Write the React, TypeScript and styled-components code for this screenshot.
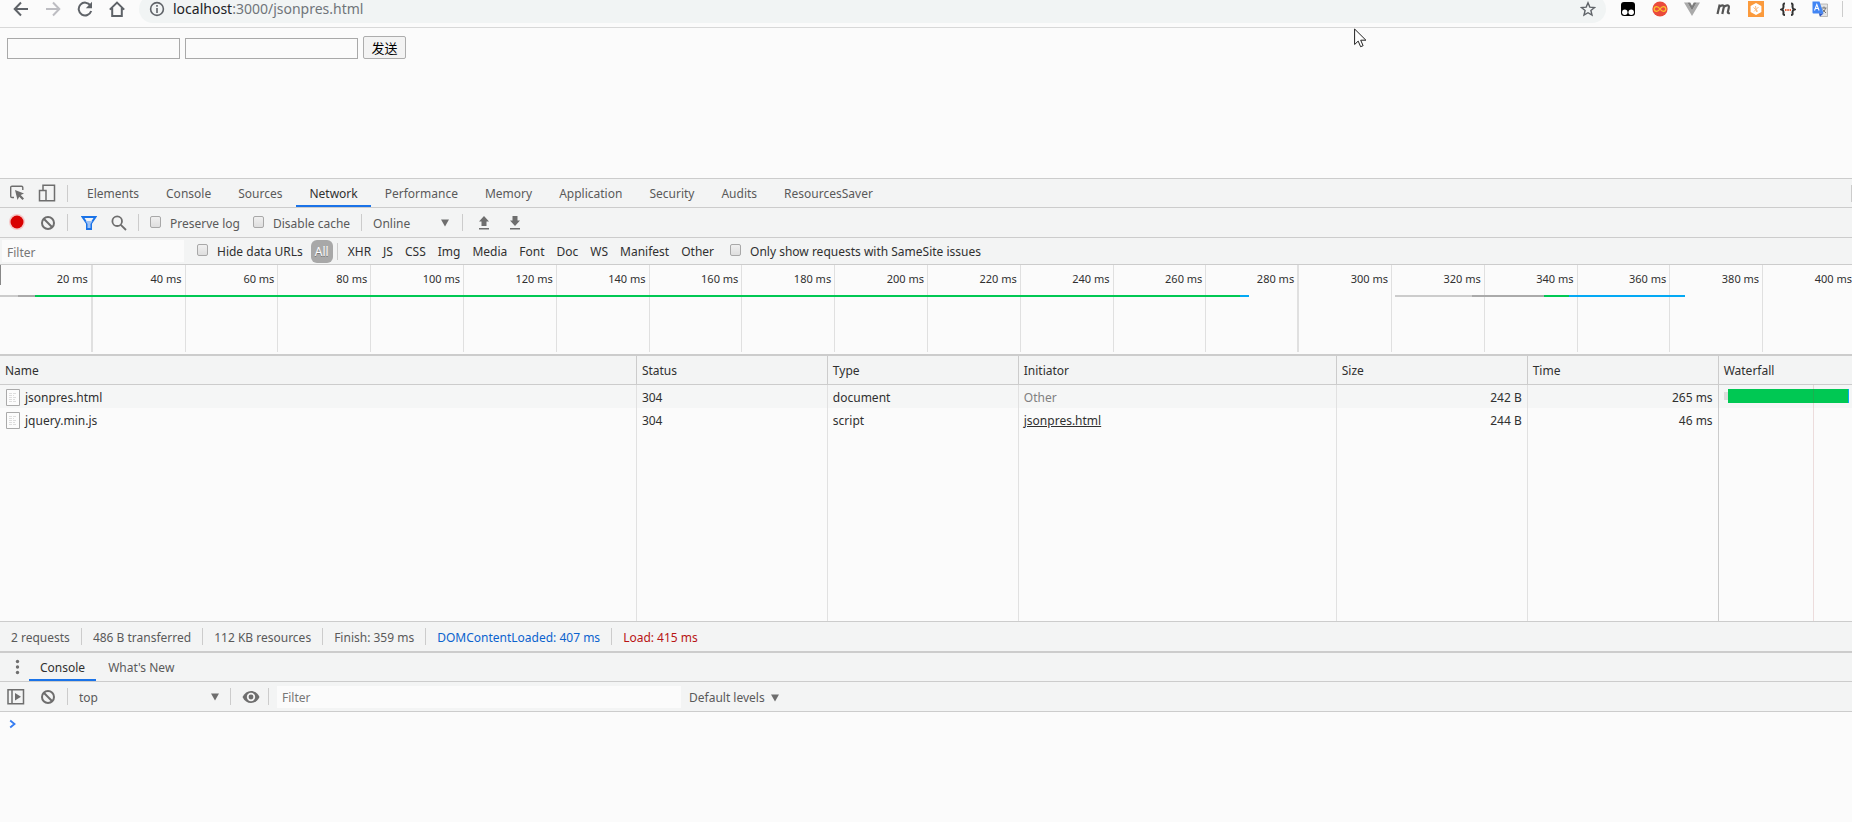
import React from 'react';
import styled, { createGlobalStyle, css } from 'styled-components';

const Global = createGlobalStyle`
  *, *::before, *::after { box-sizing: border-box; }
  body {
    margin: 0;
    background: #fbfbfb;
    color: #303030;
    font: 12px/16px "Noto Sans", "Noto Sans CJK SC", sans-serif;
  }
  button, input, select { font: inherit; color: inherit; margin: 0; }
  svg { display: block; flex: none; }
`;

const BAR = '#f3f4f4';
const LINE = '#ccc';

const Page = styled.div`
  min-height: 100vh;
  overflow: hidden;
`;

/* ---------- browser chrome ---------- */

const BrowserBar = styled.header`
  height: 28px;
  overflow: hidden;
  border-bottom: 1px solid #d8d8d8;
`;

const BrowserRow = styled.div`
  display: flex;
  align-items: center;
  height: 28px;
  margin-top: -5px;
  padding: 0 9px 0 13px;
`;

const NavButtons = styled.nav`
  display: flex;
  gap: 16px;
`;

const IconButton = styled.button<{ $size?: number }>`
  display: flex;
  align-items: center;
  justify-content: center;
  flex: none;
  width: ${(p) => p.$size ?? 16}px;
  height: ${(p) => p.$size ?? 16}px;
  padding: 0;
  border: 0;
  background: none;
  color: #6e6e6e;
`;

const AddressBar = styled.div`
  display: flex;
  flex: 1;
  align-items: center;
  height: 28px;
  margin-left: 14px;
  padding: 0 10px 0 10px;
  border-radius: 14px;
  background: #f1f4f4;
`;

const Url = styled.div`
  flex: 1;
  padding-left: 8px;
  color: #70757a;
  font-size: 14px;
  line-height: 20px;
  b { color: #202124; font-weight: 400; }
`;

const Extensions = styled.div`
  display: flex;
  gap: 16px;
  margin-left: 14px;
`;

const ChromeDivider = styled.span`
  width: 1px;
  height: 16px;
  margin-left: 14px;
  background: #ccc;
`;

/* ---------- inspected page ---------- */

const Inspected = styled.main`
  height: 150px;
`;

const SendForm = styled.form`
  display: flex;
  align-items: flex-end;
  gap: 5px;
  padding: 8px 7px;
`;

const PlainInput = styled.input`
  width: 173px;
  height: 21px;
  padding: 1px 3px;
  border: 1px solid #a9a9a9;
  background: #fbfbfb;
`;

const SendButton = styled.button`
  height: 23px;
  width: 43px;
  padding: 0;
  border: 1px solid #adadad;
  border-radius: 2px;
  background: #f3f3f3;
  color: #000;
  font: 13px/20px "Noto Sans CJK SC", sans-serif;
`;

/* ---------- devtools ---------- */

const DevTools = styled.section`
  border-top: 1px solid ${LINE};
`;

const Bar = styled.div<{ $height: number; $thick?: boolean }>`
  display: flex;
  align-items: center;
  height: ${(p) => p.$height}px;
  border-bottom: ${(p) => (p.$thick ? 2 : 1)}px solid ${LINE};
  background: ${BAR};
  color: #5a5a5a;
  white-space: nowrap;
`;

const Divider = styled.span<{ $gap?: number }>`
  flex: none;
  width: 1px;
  height: 17px;
  margin: 0 ${(p) => p.$gap ?? 11}px;
  background: ${LINE};
`;

const ToolIcons = styled.div<{ $gap: number; $left?: number; $right?: number }>`
  display: flex;
  align-items: center;
  gap: ${(p) => p.$gap}px;
  padding-left: ${(p) => p.$left ?? 0}px;
  padding-right: ${(p) => p.$right ?? 0}px;
`;

const Tabs = styled.div`
  display: flex;
  align-self: stretch;
  flex: 1;
  gap: 1px;
`;

const Tab = styled.button<{ $active?: boolean; $pad: number }>`
  height: 100%;
  padding: 4px ${(p) => p.$pad}px 0;
  border: 0;
  border-bottom: 2px solid transparent;
  background: none;
  ${(p) => p.$active && css`
    border-bottom-color: #1a73e8;
    color: #303030;
  `}
`;

const Check = styled.label<{ $dark?: boolean }>`
  display: flex;
  align-items: center;
  gap: 9px;
  padding-top: 2px;
  color: ${(p) => (p.$dark ? '#303030' : '#5a5a5a')};
  input {
    appearance: none;
    width: 11px;
    height: 12px;
    margin-bottom: 4px;
    border: 1px solid #a8a8a8;
    border-radius: 2px;
    background: linear-gradient(#f0f0f0, #dedede);
  }
`;

const Checks = styled.div`
  display: flex;
  gap: 13px;
`;

const SelectBox = styled.div<{ $width: number }>`
  display: flex;
  align-items: center;
  width: ${(p) => p.$width}px;
  select {
    flex: 1;
    appearance: none;
    height: 20px;
    padding: 2px 0 0;
    border: 0;
    background: none;
  }
`;

const LevelsButton = styled.button`
  display: flex;
  align-items: center;
  gap: 6px;
  padding: 2px 8px 0;
  border: 0;
  background: none;
`;

const FilterInput = styled.input<{ $width: number }>`
  width: ${(p) => p.$width}px;
  height: 22px;
  padding: 2px 5px 0;
  border: 0;
  background: #fbfbfb;
  &::placeholder { color: #777; opacity: 1; }
`;

const FilterField = styled.div`
  padding: 0 13px 0 2px;
`;

const Types = styled.div`
  display: flex;
  align-items: center;
  padding: 0 10px 0 8px;
`;

const TypeButton = styled.button<{ $on?: boolean }>`
  height: 23px;
  padding: 2px 6px 0;
  border: 0;
  border-radius: 6px;
  background: ${(p) => (p.$on ? '#a8a8a8' : 'none')};
  color: ${(p) => (p.$on ? '#fff' : '#303030')};
  ${(p) => p.$on && css`
    padding: 2px 4px 0;
    text-shadow: 0 1px 0 #777;
  `}
`;

/* ---------- overview ---------- */

const Overview = styled.div`
  position: relative;
  height: 91px;
  overflow: hidden;
  border-bottom: 2px solid ${LINE};
`;

const Ruler = styled.div`
  display: flex;
  height: 87px;
`;

const Tick = styled.div<{ $strong?: boolean }>`
  flex: 0 0 5.011%;
  padding: 6px 3px 0 0;
  border-right: ${(p) => (p.$strong ? 2 : 1)}px solid #e0e0e0;
  font-size: 11px;
  text-align: right;
  white-space: nowrap;
`;

const StartMark = styled.span`
  position: absolute;
  top: 0;
  left: 0;
  width: 1px;
  height: 20px;
  background: #888;
`;

const Span = styled.span`
  position: absolute;
  top: 30px;
  height: 2px;
`;

/* ---------- request table ---------- */

const Table = styled.table`
  width: 100%;
  height: 265px;
  border-collapse: separate;
  border-spacing: 0;
  table-layout: fixed;
`;

const cellBase = css`
  padding: 2px 5px 0;
  text-align: left;
  font-weight: 400;
  white-space: nowrap;
`;

const Th = styled.th`
  ${cellBase}
  height: 29px;
  border-right: 1px solid ${LINE};
  border-bottom: 1px solid ${LINE};
  background: ${BAR};
  &:last-child { border-right: 0; }
`;

const Td = styled.td<{ $right?: boolean; $muted?: boolean }>`
  ${cellBase}
  border-right: 1px solid #e1e1e1;
  ${(p) => p.$right && 'text-align: right;'}
  ${(p) => p.$muted && 'color: #808080;'}
  a { color: inherit; }
  &:nth-child(6) { border-right-color: ${LINE}; }
`;

const Row = styled.tr<{ $shade?: boolean }>`
  height: 23px;
  background: ${(p) => (p.$shade ? '#f5f6f6' : 'none')};
`;

const FillRow = styled.tr``;

const FileName = styled.div`
  display: flex;
  align-items: center;
  gap: 5px;
  padding-left: 1px;
`;

const WaterCell = styled.td`
  position: relative;
  padding: 0;
  &::after {
    content: '';
    position: absolute;
    top: 0;
    bottom: 0;
    left: 71%;
    width: 1px;
    background: rgba(160, 60, 60, 0.16);
  }
`;

const WaterBar = styled.div`
  display: flex;
  align-items: center;
  padding: 0 3px 2px 5px;
`;

const Wait = styled.span`
  width: 4px;
  height: 8px;
  background: #ddd;
`;

const Receive = styled.span`
  flex: 1;
  height: 14px;
  border-right: 1px solid #03a9f4;
  background: #00c853;
`;

/* ---------- status + console ---------- */

const Status = styled(Bar)`
  padding-left: 11px;
  border-top: 1px solid ${LINE};
`;

const Metric = styled.span<{ $color?: string }>`
  padding-top: 2px;
  color: ${(p) => p.$color ?? '#5a5a5a'};
`;

const ConsoleBody = styled.div`
  padding: 7px 9px;
`;

const Pointer = styled.svg`
  position: absolute;
  top: 28px;
  left: 73.1%;
`;

/* ---------- icons ---------- */

const Caret = () => (
  <svg width="8" height="8" viewBox="0 0 8 8" fill="#6e6e6e"><path d="M0 0.5h8L4 7.5z" /></svg>
);

const Clear = () => (
  <svg width="16" height="16" viewBox="0 0 16 16" fill="none" stroke="#6e6e6e" strokeWidth="2">
    <circle cx="8" cy="8" r="6" /><path d="M3.8 3.8l8.4 8.4" />
  </svg>
);

const Doc = () => (
  <svg width="14" height="17" viewBox="0 0 14 17" fill="#fcfcfc" stroke="#aaa">
    <path d="M.5 .5h13v16h-13z" />
    <path d="M3 4.5h8M3 6.5h5M3 8.5h8M3 10.5h6M3 12.5h7" stroke="#ddd" strokeDasharray="3 1" />
  </svg>
);

const Arrow = ({ flip, color }: { flip?: boolean; color: string }) => (
  <svg width="16" height="16" viewBox="0 0 16 16" fill="none" stroke={color} strokeWidth="2">
    <path d={flip ? 'M1 8h13M8 1.5L14.3 8 8 14.5' : 'M15 8H2M8 1.5L1.7 8 8 14.5'} />
  </svg>
);

const tabs = ['Elements', 'Console', 'Sources', 'Network', 'Performance', 'Memory', 'Application', 'Security', 'Audits', 'ResourcesSaver'];
const types = ['XHR', 'JS', 'CSS', 'Img', 'Media', 'Font', 'Doc', 'WS', 'Manifest', 'Other'];
const ticks = Array.from({ length: 20 }, (_, i) => (i + 1) * 20);

const spans = [
  { from: 0, to: 0.97, color: '#ccc' },
  { from: 0.97, to: 1.89, color: '#aaa' },
  { from: 1.89, to: 66.98, color: '#00c853' },
  { from: 66.98, to: 67.46, color: '#03a9f4' },
  { from: 75.32, to: 79.48, color: '#ccc' },
  { from: 79.48, to: 83.37, color: '#aaa' },
  { from: 83.37, to: 84.72, color: '#00c853' },
  { from: 84.72, to: 90.98, color: '#03a9f4' },
];

const columns = [
  ['Name', '34.39%'], ['Status', '10.31%'], ['Type', '10.31%'], ['Initiator', '17.17%'],
  ['Size', '10.31%'], ['Time', '10.31%'], ['Waterfall', 'auto'],
];

export default function App() {
  return (
    <Page>
      <Global />
      <BrowserBar>
        <BrowserRow>
          <NavButtons aria-label="Navigation">
            <IconButton aria-label="Back"><Arrow color="#5f6368" /></IconButton>
            <IconButton aria-label="Forward"><Arrow flip color="#bdbdc2" /></IconButton>
            <IconButton aria-label="Reload">
              <svg width="16" height="16" viewBox="0 0 16 16" fill="none" stroke="#5f6368" strokeWidth="2">
                <path d="M13.4 4.4A6.4 6.4 0 1 0 14.2 10" /><path d="M15 .8v6.4H8.8z" fill="#5f6368" stroke="none" />
              </svg>
            </IconButton>
            <IconButton aria-label="Home">
              <svg width="16" height="16" viewBox="0 0 16 16" fill="none" stroke="#5f6368" strokeWidth="2">
                <path d="M.8 8.6L8 1.6l7.2 7M3.2 7v8h9.6V7" />
              </svg>
            </IconButton>
          </NavButtons>
          <AddressBar>
            <svg width="16" height="16" viewBox="0 0 16 16" fill="none" stroke="#5f6368" strokeWidth="1.6">
              <circle cx="8" cy="8" r="6.4" /><path d="M8 7v5M8 4v1.7" />
            </svg>
            <Url><b>localhost</b>:3000/jsonpres.html</Url>
            <IconButton aria-label="Bookmark this page">
              <svg width="16" height="16" viewBox="0 0 16 16" fill="none" stroke="#5f6368" strokeWidth="1.4">
                <path d="M8 1.8l1.8 4.3 4.7.4-3.6 3 1.1 4.6L8 11.7 4 14.1l1.1-4.6-3.6-3 4.7-.4z" />
              </svg>
            </IconButton>
          </AddressBar>
          <Extensions>
            <svg width="16" height="16" viewBox="0 0 16 16">
              <rect x="1" y="1" width="14" height="14" rx="3" fill="#000" />
              <circle cx="4.8" cy="11.2" r="2.7" fill="#fff" /><circle cx="11.2" cy="11.2" r="2.7" fill="#fff" />
            </svg>
            <svg width="16" height="16" viewBox="0 0 16 16">
              <circle cx="8" cy="8" r="7.6" fill="#ea4a3c" />
              <path d="M8 8C6.6 5.9 5.6 5.6 4.6 5.6a2.4 2.4 0 0 0 0 4.8C5.6 10.4 6.6 10.1 8 8s2.4-2.4 3.4-2.4a2.4 2.4 0 0 1 0 4.8C10.4 10.4 9.4 10.1 8 8z" fill="none" stroke="#fbc02d" strokeWidth="1.3" />
            </svg>
            <svg width="16" height="16" viewBox="0 0 16 16">
              <path d="M0 1.5h3.4L8 9.5l4.6-8H16L8 15z" fill="#aaa" /><path d="M3.4 1.5h2.8L8 4.7l1.8-3.2h2.8L8 9.5z" fill="#7d7d7d" />
            </svg>
            <svg width="16" height="16" viewBox="0 0 16 16" fill="none" stroke="#555" strokeWidth="2.2">
              <path d="M1.5 13L3.7 3.5M2.8 6.5C4.6 3.8 8.4 3.3 7.7 6.5L6.3 13M7.5 6.5C9.3 3.8 13.7 3.3 12.8 6.8L11.8 11.2Q11.7 12.6 13.8 12" />
            </svg>
            <svg width="16" height="16" viewBox="0 0 16 16">
              <rect width="16" height="16" fill="#fb9a3c" /><path d="M8 2l5.4 3v6L8 14l-5.4-3V5z" fill="#fff" />
              <path d="M5.5 6.5l4.5 4M6 10.5l4.5-4.5M7.5 5l1 6" stroke="#fbb97a" fill="none" />
            </svg>
            <svg width="16" height="16" viewBox="0 0 16 16" fill="none" stroke="#333" strokeWidth="2">
              <path d="M5 2.5C2.8 2.5 3.5 4 3.5 6 3.5 7.5 3 8 1.5 8.5 3 9 3.5 9.5 3.5 11c0 2-.7 3 1.5 3M11 2.5c2.2 0 1.5 1.5 1.5 3.5 0 1.500.5 2 2 2.5-1.500.5-2 1-2 2.5 0 2 .7 3-1.5 3" />
              <path d="M5 9h1.5M7.3 9h1.5M9.6 9H11" stroke="#e8643c" />
            </svg>
            <svg width="16" height="16" viewBox="0 0 16 16">
              <path d="M6 3h9.5v12.5H8z" fill="#e4e4e4" stroke="#999" strokeWidth=".6" />
              <path d="M9.5 7h5M12 5.5V7M13.5 7c-.5 2.5-2 4-3.5 5M10.5 8.5l3.5 3.5" stroke="#777" fill="none" />
              <path d="M.5 .5h7L11.5 12.5H1.5a1 1 0 0 1-1-1z" fill="#4285f4" />
              <path d="M8 15.5l3.5-3H7z" fill="#2a56c6" />
              <path d="M2.5 9.5L4.8 3.5 7.1 9.5M3.3 7.5h3" stroke="#fff" fill="none" strokeWidth="1.1" />
            </svg>
          </Extensions>
          <ChromeDivider />
        </BrowserRow>
      </BrowserBar>

      <Inspected>
        <SendForm onSubmit={(e) => e.preventDefault()}>
          <PlainInput type="text" aria-label="First value" />
          <PlainInput type="text" aria-label="Second value" />
          <SendButton type="submit">发送</SendButton>
        </SendForm>
      </Inspected>

      <DevTools>
        <Bar $height={29}>
          <ToolIcons $left={8} $gap={12} $right={5}>
            <IconButton $size={18} aria-label="Inspect element">
              <svg width="18" height="18" viewBox="0 0 18 18" fill="none" stroke="#6e6e6e" strokeWidth="1.4">
                <path d="M6 13.5H4a1.3 1.3 0 0 1-1.3-1.3V3.5A1.3 1.3 0 0 1 4 2.2h9.5a1.3 1.3 0 0 1 1.3 1.3V6" />
                <path d="M7 6l9 3.5-3.3 1.6L16 14.5 14.5 16l-3.3-3.3L9.5 16z" fill="#6e6e6e" stroke="none" />
              </svg>
            </IconButton>
            <IconButton $size={18} aria-label="Toggle device toolbar">
              <svg width="18" height="18" viewBox="0 0 18 18" fill="none" stroke="#6e6e6e" strokeWidth="1.5">
                <path d="M5 6V1.2h11.5v15.6H8M1.5 6.5H8v10.3H1.5z" />
              </svg>
            </IconButton>
          </ToolIcons>
          <Divider $gap={6} />
          <Tabs role="tablist">
            {tabs.map((t) => (
              <Tab key={t} role="tab" $pad={13} $active={t === 'Network'}>{t}</Tab>
            ))}
          </Tabs>
          <Divider $gap={0} />
        </Bar>

        <Bar $height={30}>
          <ToolIcons $left={9} $gap={15}>
            <IconButton aria-label="Stop recording">
              <svg width="16" height="18" viewBox="0 0 16 18">
                <circle cx="8" cy="8" r="8" fill="#f6b5b5" opacity=".7" /><circle cx="8" cy="8" r="6.5" fill="#d80000" />
              </svg>
            </IconButton>
            <IconButton aria-label="Clear"><Clear /></IconButton>
          </ToolIcons>
          <Divider />
          <ToolIcons $left={2} $gap={14}>
            <IconButton aria-label="Filter">
              <svg width="16" height="16" viewBox="0 0 16 16" fill="none" stroke="#1a73e8" strokeWidth="2">
                <path d="M1.6 2h12.8L10 8.5V14H6V8.5z" /><path d="M4.5 6h7L9.5 9v4h-3V9z" fill="#9cc1f5" stroke="none" />
              </svg>
            </IconButton>
            <IconButton aria-label="Search">
              <svg width="16" height="16" viewBox="0 0 16 16" fill="none" stroke="#6e6e6e" strokeWidth="1.8">
                <circle cx="6.2" cy="6.2" r="4.8" /><path d="M9.8 9.8l5.2 5.2" />
              </svg>
            </IconButton>
          </ToolIcons>
          <Divider />
          <Checks>
            <Check><input type="checkbox" />Preserve log</Check>
            <Check><input type="checkbox" />Disable cache</Check>
          </Checks>
          <Divider />
          <SelectBox $width={76}>
            <select aria-label="Throttling" defaultValue="Online"><option>Online</option></select>
            <Caret />
          </SelectBox>
          <Divider $gap={13} />
          <ToolIcons $gap={15}>
            <IconButton aria-label="Import HAR">
              <svg width="16" height="16" viewBox="0 0 16 16" fill="#6e6e6e"><path d="M8 1l5 5.5h-2.5V11h-5V6.5H3zM3 13h10v1.5H3z" /></svg>
            </IconButton>
            <IconButton aria-label="Export HAR">
              <svg width="16" height="16" viewBox="0 0 16 16" fill="#6e6e6e"><path d="M5.5 1h5v4.5H13L8 11 3 5.5h2.5zM3 13h10v1.5H3z" /></svg>
            </IconButton>
          </ToolIcons>
        </Bar>

        <Bar $height={27}>
          <FilterField><FilterInput $width={182} placeholder="Filter" aria-label="Filter requests" /></FilterField>
          <Check $dark><input type="checkbox" />Hide data URLs</Check>
          <Types>
            <TypeButton $on>All</TypeButton>
            <Divider $gap={4} />
            {types.map((t) => <TypeButton key={t}>{t}</TypeButton>)}
          </Types>
          <Check $dark><input type="checkbox" />Only show requests with SameSite issues</Check>
        </Bar>

        <Overview>
          <Ruler>
            {ticks.map((t) => <Tick key={t} $strong={t === 20 || t === 280}>{t} ms</Tick>)}
          </Ruler>
          <StartMark />
          {spans.map((s) => (
            <Span key={s.from} style={{ left: `${s.from}%`, width: `${s.to - s.from}%`, background: s.color }} />
          ))}
        </Overview>

        <Table>
          <colgroup>{columns.map(([name, width]) => <col key={name} style={{ width }} />)}</colgroup>
          <thead>
            <tr>{columns.map(([name]) => <Th key={name} scope="col">{name}</Th>)}</tr>
          </thead>
          <tbody>
            <Row $shade>
              <Td><FileName><Doc />jsonpres.html</FileName></Td>
              <Td>304</Td><Td>document</Td><Td $muted>Other</Td>
              <Td $right>242 B</Td><Td $right>265 ms</Td>
              <WaterCell><WaterBar><Wait /><Receive /></WaterBar></WaterCell>
            </Row>
            <Row>
              <Td><FileName><Doc />jquery.min.js</FileName></Td>
              <Td>304</Td><Td>script</Td><Td><a href="#jsonpres">jsonpres.html</a></Td>
              <Td $right>244 B</Td><Td $right>46 ms</Td>
              <WaterCell />
            </Row>
            <FillRow><Td /><Td /><Td /><Td /><Td /><Td /><WaterCell /></FillRow>
          </tbody>
        </Table>

        <Status $height={32} $thick>
          <Metric>2 requests</Metric><Divider />
          <Metric>486 B transferred</Metric><Divider />
          <Metric>112 KB resources</Metric><Divider />
          <Metric>Finish: 359 ms</Metric><Divider />
          <Metric $color="#0b63ce">DOMContentLoaded: 407 ms</Metric><Divider />
          <Metric $color="#b81414">Load: 415 ms</Metric>
        </Status>

        <Bar $height={29}>
          <ToolIcons $left={9} $gap={0} $right={4}>
            <IconButton aria-label="More tools">
              <svg width="16" height="16" viewBox="0 0 16 16" fill="#6e6e6e">
                <circle cx="8.5" cy="2.5" r="1.7" /><circle cx="8.5" cy="8" r="1.7" /><circle cx="8.5" cy="13.5" r="1.7" />
              </svg>
            </IconButton>
          </ToolIcons>
          <Tabs role="tablist">
            <Tab role="tab" $pad={11} $active>Console</Tab>
            <Tab role="tab" $pad={11}>What's New</Tab>
          </Tabs>
        </Bar>

        <Bar $height={30}>
          <ToolIcons $left={7} $gap={15}>
            <IconButton $size={18} aria-label="Show console sidebar">
              <svg width="18" height="18" viewBox="0 0 18 18" fill="none" stroke="#6e6e6e" strokeWidth="1.5">
                <path d="M1 1.7h15.5v14H1zM5 2v13.5" /><path d="M8 5l6 3.8-6 3.8z" fill="#6e6e6e" stroke="none" />
              </svg>
            </IconButton>
            <IconButton aria-label="Clear console"><Clear /></IconButton>
          </ToolIcons>
          <Divider />
          <SelectBox $width={140}>
            <select aria-label="JavaScript context" defaultValue="top"><option>top</option></select>
            <Caret />
          </SelectBox>
          <Divider />
          <IconButton $size={18} aria-label="Create live expression">
            <svg width="18" height="18" viewBox="0 0 18 18">
              <path d="M.5 9C2.5 5 5.5 3 9 3s6.5 2 8.5 6c-2 4-5 6-8.5 6S2.5 13 .5 9z" fill="#6e6e6e" />
              <circle cx="9" cy="9" r="4.2" fill="#f3f3f3" /><circle cx="9" cy="9" r="2.4" fill="#6e6e6e" />
            </svg>
          </IconButton>
          <Divider $gap={8} />
          <FilterInput $width={404} placeholder="Filter" aria-label="Filter console messages" />
          <LevelsButton>Default levels <Caret /></LevelsButton>
        </Bar>

        <ConsoleBody>
          <svg width="8" height="10" viewBox="0 0 8 10" fill="none" stroke="#367cf1" strokeWidth="1.8"><path d="M1.2 1.5L5.5 5 1.2 8.5" /></svg>
        </ConsoleBody>
      </DevTools>

      <Pointer width="13" height="20" viewBox="0 0 13 20" fill="#fff" stroke="#222">
        <path d="M.6 1v15.5l3.6-3.4 2.4 5.6 2.5-1-2.4-5.5h5.2z" />
      </Pointer>
    </Page>
  );
}
